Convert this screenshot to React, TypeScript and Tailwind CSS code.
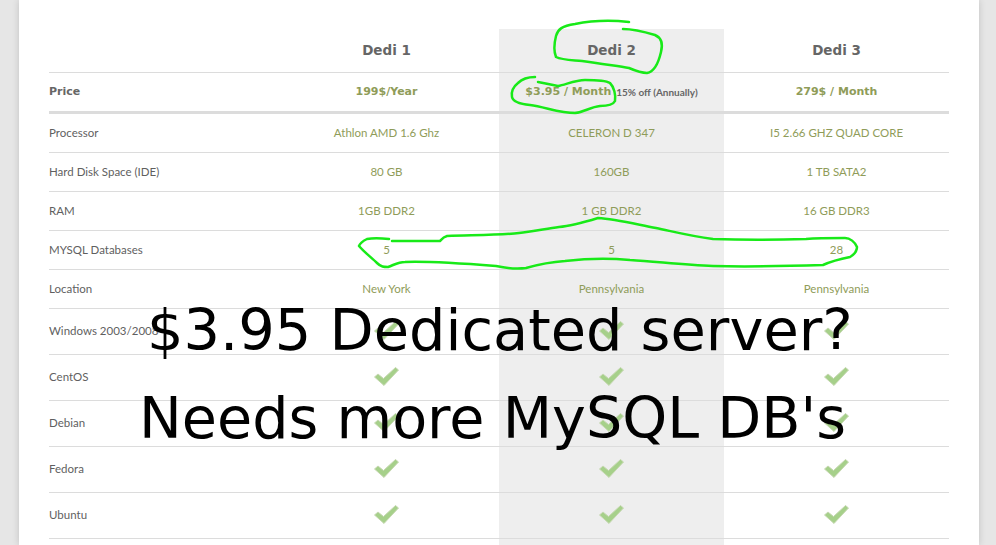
import React from 'react';

const specs = [
  { label: 'Processor', a: 'Athlon AMD 1.6 Ghz', b: 'CELERON D 347', c: 'I5 2.66 GHZ QUAD CORE' },
  { label: 'Hard Disk Space (IDE)', a: '80 GB', b: '160GB', c: '1 TB SATA2' },
  { label: 'RAM', a: '1GB DDR2', b: '1 GB DDR2', c: '16 GB DDR3' },
  { label: 'MYSQL Databases', a: '5', b: '5', c: '28' },
  { label: 'Location', a: 'New York', b: 'Pennsylvania', c: 'Pennsylvania' },
];

const systems = ['Windows 2003/2008', 'CentOS', 'Debian', 'Fedora', 'Ubuntu'];

function Check() {
  return (
    <svg className="mb-[2px] mr-[1px]" width="27" height="21" viewBox="0 0 27 21">
      <path d="M1.5 11 L5 8 L10.5 12.5 L22.5 1.5 L25.5 4 L11 19.5 Z" fill="#a6d08a" stroke="#c6d8b2" strokeWidth="1" strokeLinejoin="round" />
    </svg>
  );
}

function Row({ label, a, b, c, h, labelClass = 'text-[#5f5f5f]', cellClass = 'text-[#8f9c59]' }: { label: React.ReactNode; a: React.ReactNode; b: React.ReactNode; c: React.ReactNode; h: string; labelClass?: string; cellClass?: string }) {
  return (
    <div className={`grid grid-cols-[225px_225px_225px_225px] border-b border-[#dcdcdc] ${h}`}>
      <div className={`flex items-center ${labelClass}`}>{label}</div>
      <div className={`flex items-center justify-center ${cellClass}`}>{a}</div>
      <div className={`flex items-center justify-center bg-[#eeeeee] ${cellClass}`}>{b}</div>
      <div className={`flex items-center justify-center ${cellClass}`}>{c}</div>
    </div>
  );
}

export default function App() {
  return (
    <div className="relative h-[545px] w-[996px] overflow-hidden bg-[#e6e6e6] font-['Lato',sans-serif] text-[11.5px]">
      <div className="mx-[19px] h-full w-[960px] bg-white px-[30px] pt-[29px] shadow-[0_0_7px_rgba(0,0,0,0.16)]">
        <Row
          h="h-[44px]"
          label=""
          a="Dedi 1"
          b="Dedi 2"
          c="Dedi 3"
          cellClass="pb-[1px] font-['DejaVu_Sans',sans-serif] text-[13.5px] font-bold text-[#666666]"
        />
        <div className="grid h-[41px] grid-cols-[225px_225px_225px_225px] border-b-[3px] border-[#dcdcdc] pb-0 font-['DejaVu_Sans',sans-serif] text-[11px] font-bold text-[#8f9c59]">
          <div className="flex items-center pt-[1px] text-[#666666]">Price</div>
          <div className="flex items-center justify-center pt-[1px]">199$/Year</div>
          <div className="flex items-center justify-center bg-[#eeeeee] pt-[1px]">
            <span>$3.95 / Month</span>
            <span className="ml-[5px] font-['Lato',sans-serif] text-[10px] font-bold text-[#666666]">15% off (Annually)</span>
          </div>
          <div className="flex items-center justify-center pt-[1px]">279$ / Month</div>
        </div>
        {specs.map((s) => (
          <Row key={s.label} h="h-[39px]" label={s.label} a={s.a} b={s.b} c={s.c} />
        ))}
        {systems.map((s) => (
          <Row key={s} h="h-[46px]" label={s} labelClass="pb-[1px] text-[#5f5f5f]" a={<Check />} b={<Check />} c={<Check />} />
        ))}
        <Row h="h-[46px]" label="" a="" b="" c="" />
      </div>

      {/* hand drawn marker */}
      <svg className="pointer-events-none absolute left-0 top-0" width="996" height="545" fill="none" stroke="#18ea18" strokeWidth="2.5" strokeLinecap="round" strokeLinejoin="round">
        <path d="M629 22 C610 20 590 21 575 24 C562 26 558 29 556 36 C554 44 554 52 556 57 C562 60 572 60 582 61 C598 63 615 66 629 68 C636 71 642 73 647 73 C653 72 658 65 661 52 C663 44 662 38 655 35 C645 32 635 29 623 29" />
        <path d="M535 77 C528 77 522 79 518 83 C513 87 511 92 512 97 C513 102 520 104 530 105 C545 107 560 113 575 113 C585 112 590 107 600 106 C608 106 613 105 615 101 C616 95 614 87 610 83 C605 80 595 80 585 80 C575 80 565 85 558 86 C550 85 545 83 538 82" />
        <path d="M389 239 C380 238 372 238 367 239 C363 241 360 243 359 246 C364 252 372 258 377 263 C381 267 384 267 388 267 C394 265 398 262 405 262 C430 261 470 264 496 266 C510 269 518 269 526 268 C540 264 550 262 565 261 C590 258 610 258 630 260 C660 262 685 265 713 266 C750 267 790 266 823 265 C832 261 840 259 850 257 C855 254 857 250 857 247 C855 242 850 238 845 238 C830 238 818 238 806 239 C775 240 740 240 713 239 C690 236 675 232 656 228 C635 224 615 219 598 218 C585 222 572 226 559 227 C545 229 530 232 519 233 C505 235 480 235 447 236 C443 237 441 240 440 241 C425 241 408 241 392 241" />
      </svg>

      <div className="absolute left-[147px] top-[296px] whitespace-nowrap font-['DejaVu_Sans',sans-serif] text-[57.4px] leading-[70px] text-black">
        $3.95 Dedicated server?
      </div>
      <div className="absolute left-[139px] top-[383px] whitespace-nowrap font-['DejaVu_Sans',sans-serif] text-[57.2px] leading-[70px] text-black">
        Needs more MySQL DB's
      </div>
    </div>
  );
}
